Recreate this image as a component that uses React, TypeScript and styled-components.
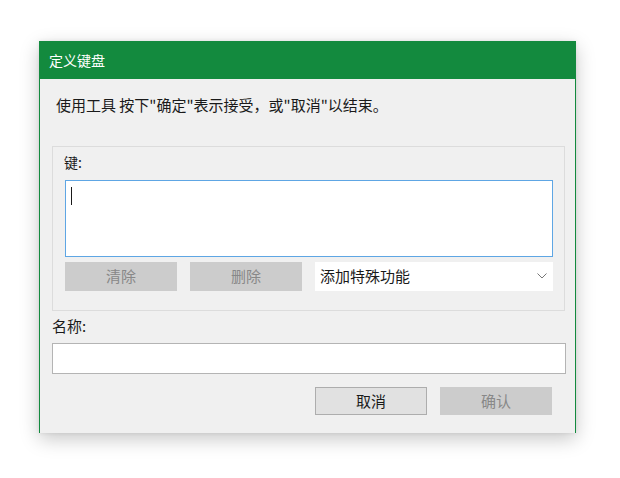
import React from "react";
import styled, { createGlobalStyle } from "styled-components";

const GlobalStyle = createGlobalStyle`
  html, body {
    margin: 0;
    padding: 0;
    background: #ffffff;
  }
  body {
    font-family: "Noto Sans CJK SC", "Noto Sans", sans-serif;
    color: #1a1a1a;
  }
`;

const Page = styled.div`
  padding: 41px 0 0 39px;
  width: 620px;
  height: 478px;
  box-sizing: border-box;
`;

const Dialog = styled.div`
  width: 537px;
  height: 392px;
  box-sizing: border-box;
  background: #f0f0f0;
  border-left: 1px solid #138a3e;
  border-right: 1px solid #138a3e;
  box-shadow: 0 6px 18px rgba(0, 0, 0, 0.22), 0 0 4px rgba(0, 0, 0, 0.08);
  display: flex;
  flex-direction: column;
`;

const TitleBar = styled.div`
  height: 38px;
  background: #138a3e;
  color: #ffffff;
  font-size: 14px;
  display: flex;
  align-items: center;
  padding-left: 10px;
  margin: 0 -1px;
`;

const Body = styled.div`
  padding: 16px 9px 0 12px;
  display: flex;
  flex-direction: column;
`;

const Hint = styled.div`
  font-size: 15px;
  line-height: 20px;
  padding-left: 4px;
  color: #1a1a1a;
`;

const GroupBox = styled.div`
  margin-top: 31px;
  border: 1px solid #dcdcdc;
  width: 513px;
  height: 165px;
  box-sizing: border-box;
  padding: 5px 11px 0 11px;
  display: flex;
  flex-direction: column;
`;

const Label = styled.div`
  font-size: 14px;
  line-height: 20px;
  color: #1a1a1a;
`;

const KeyBox = styled.div`
  margin-top: 8px;
  margin-left: 1px;
  height: 77px;
  background: #ffffff;
  border: 1px solid #5ea6e4;
  box-sizing: border-box;
  padding: 6px 0 0 5px;
`;

const Caret = styled.div`
  width: 1px;
  height: 18px;
  background: #1a1a1a;
`;

const ActionRow = styled.div`
  margin-top: 5px;
  margin-left: 1px;
  display: flex;
  gap: 13px;
  height: 29px;
`;

const Button = styled.div<{ $disabled?: boolean }>`
  width: 112px;
  height: 100%;
  box-sizing: border-box;
  display: flex;
  align-items: center;
  justify-content: center;
  padding-bottom: 2px;
  font-size: 15px;
  background: ${(p) => (p.$disabled ? "#cccccc" : "#e1e1e1")};
  color: ${(p) => (p.$disabled ? "#888888" : "#1a1a1a")};
  border: 1px solid ${(p) => (p.$disabled ? "#cccccc" : "#adadad")};
`;

const Select = styled.div`
  flex: 1;
  background: #ffffff;
  display: flex;
  align-items: center;
  justify-content: space-between;
  padding: 0 6px 2px 5px;
  font-size: 15px;
  color: #1a1a1a;
`;

const NameLabel = styled(Label)`
  margin-top: 5px;
  font-size: 15px;
`;

const NameInput = styled.div`
  margin-top: 7px;
  width: 514px;
  height: 31px;
  box-sizing: border-box;
  background: #ffffff;
  border: 1px solid #b4b4b4;
`;

const Footer = styled.div`
  margin-top: 13px;
  display: flex;
  justify-content: flex-end;
  gap: 13px;
  height: 28px;
  padding-right: 14px;
`;

const Chevron = () => (
  <svg width="10" height="6" viewBox="0 0 10 6">
    <path d="M0.5 0.5 L5 5 L9.5 0.5" fill="none" stroke="#777" strokeWidth="1" />
  </svg>
);

const App = () => (
  <>
    <GlobalStyle />
    <Page>
      <Dialog>
        <TitleBar>定义键盘</TitleBar>
        <Body>
          <Hint>使用工具 按下"确定"表示接受，或"取消"以结束。</Hint>
          <GroupBox>
            <Label>键:</Label>
            <KeyBox>
              <Caret />
            </KeyBox>
            <ActionRow>
              <Button $disabled>清除</Button>
              <Button $disabled>删除</Button>
              <Select>
                <span>添加特殊功能</span>
                <Chevron />
              </Select>
            </ActionRow>
          </GroupBox>
          <NameLabel>名称:</NameLabel>
          <NameInput />
          <Footer>
            <Button>取消</Button>
            <Button $disabled>确认</Button>
          </Footer>
        </Body>
      </Dialog>
    </Page>
  </>
);

export default App;
